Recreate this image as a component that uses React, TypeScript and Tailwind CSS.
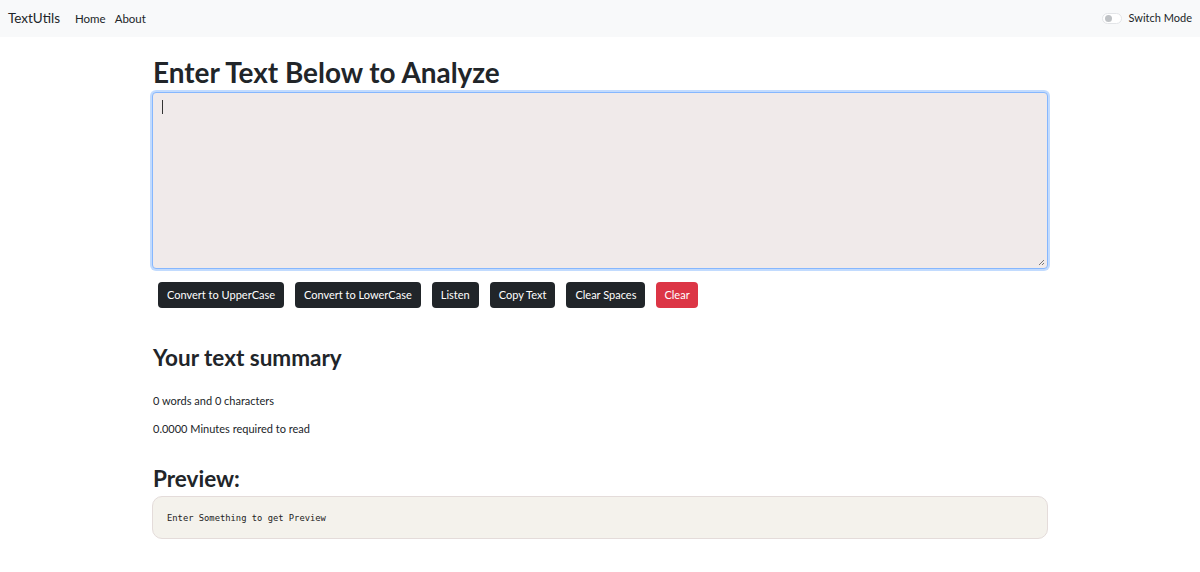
import React from 'react';

const App: React.FC = () => {
  const buttons = [
    'Convert to UpperCase',
    'Convert to LowerCase',
    'Listen',
    'Copy Text',
    'Clear Spaces',
  ];

  return (
    <div className="min-h-[572px] bg-white text-[#212529]" style={{ fontFamily: 'Lato, "Noto Sans", sans-serif' }}>
      {/* Navbar */}
      <nav className="h-[37px] bg-[#f8f9fa] flex items-center justify-between px-2">
        <div className="flex items-center">
          <span className="text-[13.5px] text-[#212529] mr-[15px]">TextUtils</span>
          <a className="text-[11.5px] mr-[9px]">Home</a>
          <a className="text-[11.5px]">About</a>
        </div>
        <div className="flex items-center">
          <div className="w-[20px] h-[11px] rounded-full border border-[#e3e5e8] bg-white flex items-center px-[2px] mr-[7px]">
            <div className="w-[7px] h-[7px] rounded-full bg-[#bfc2c5]" />
          </div>
          <span className="text-[11px]">Switch Mode</span>
        </div>
      </nav>

      {/* Main */}
      <div className="w-[896px] mx-auto pt-[17px]">
        <h1 className="text-[27.9px] font-bold leading-[36px] ml-[1px] mb-[2px]">Enter Text Below to Analyze</h1>
        <div className="h-[177px] rounded-[4px] border border-[#86b7fe] bg-[#f0eaea] shadow-[0_0_0_2px_rgba(13,110,253,0.25)] relative">
          <div className="absolute left-[9px] top-[7px] w-px h-[14px] bg-[#333]" />
          <svg className="absolute right-[2px] bottom-[2px]" width="7" height="7" viewBox="0 0 7 7">
            <path d="M6 1 L1 6 M6 4 L4 6" stroke="#777" strokeWidth="1" />
          </svg>
        </div>

        <div className="flex gap-[11px] ml-[6px] mt-[13px]">
          {buttons.map((b) => (
            <button key={b} className="h-[26px] px-[9px] rounded-[4px] bg-[#212529] text-white text-[11px]">
              {b}
            </button>
          ))}
          <button className="h-[26px] px-[8px] rounded-[4px] bg-[#dc3545] text-white text-[11px]">Clear</button>
        </div>

        <h2 className="text-[22.5px] font-bold leading-[28px] ml-[1px] mt-[36px]">Your text summary</h2>
        <p className="text-[11px] ml-[1px] mt-[21px]">0 words and 0 characters</p>
        <p className="text-[11px] ml-[1px] mt-[11px]">0.0000 Minutes required to read</p>

        <h2 className="text-[22.5px] font-bold leading-[28px] ml-[1px] mt-[28px]">Preview:</h2>
        <div className="h-[43px] rounded-[10px] border border-[#e4dcda] bg-[#f4f2ec] flex items-center px-[14px] mt-[3px]">
          <span className="text-[8.8px] text-[#222] mt-[2px]" style={{ fontFamily: '"DejaVu Sans Mono", monospace' }}>
            Enter Something to get Preview
          </span>
        </div>
      </div>
    </div>
  );
};

export default App;
